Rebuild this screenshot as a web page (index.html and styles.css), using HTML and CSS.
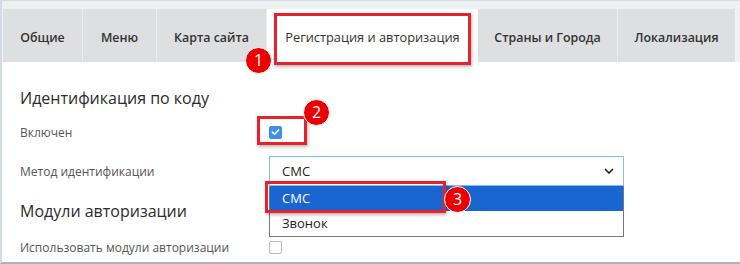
FILE: index.html
```html
<!DOCTYPE html>
<html lang="ru">
<head>
<meta charset="utf-8">
<link rel="stylesheet" href="styles.css">
</head>
<body>
<div class="frame">
  <div class="tabbar">
    <div class="tab t1">Общие</div>
    <div class="tab t2">Меню</div>
    <div class="tab t3">Карта сайта</div>
    <div class="tab active">Регистрация и авторизация</div>
    <div class="tab t5">Страны и Города</div>
    <div class="tab t6">Локализация</div>
  </div>
  <div class="content">
    <h2 class="heading h-first">Идентификация по коду</h2>
    <div class="row r1">
      <div class="label">Включен</div>
      <div class="field"><span class="cb checked"><svg viewBox="0 0 12 12" width="12" height="12"><path d="M2.6 6.2 L5 8.4 L9.4 3.8" fill="none" stroke="#fff" stroke-width="1.8" stroke-linecap="round" stroke-linejoin="round"/></svg></span></div>
    </div>
    <div class="row r2">
      <div class="label">Метод идентификации</div>
      <div class="field">
        <div class="select">
          <span>СМС</span>
          <svg class="chev" viewBox="0 0 10 6" width="10" height="6"><path d="M1 1 L5 5 L9 1" fill="none" stroke="#222" stroke-width="1.6"/></svg>
        </div>
        <div class="dropdown">
          <div class="opt sel">СМС</div>
          <div class="opt">Звонок</div>
        </div>
      </div>
    </div>
    <h2 class="heading h-second">Модули авторизации</h2>
    <div class="row r3">
      <div class="label">Использовать модули авторизации</div>
      <div class="field"><span class="cb"></span></div>
    </div>
  </div>
  <div class="mark m1"></div>
  <div class="mark m2"></div>
  <div class="mark m3"></div>
  <div class="badge b1">1</div>
  <div class="badge b2">2</div>
  <div class="badge b3">3</div>
</div>
</body>
</html>
```

FILE: styles.css
```css
* { box-sizing: border-box; }
html, body { margin: 0; padding: 0; background: #fff; }
body { font-family: "Open Sans", "DejaVu Sans", sans-serif; color: #333; }
.frame {
  position: relative;
  width: 740px;
  height: 264px;
  border-left: 2px solid #d3dbe6;
  border-top: 1px solid #d3dbe6;
  border-bottom: 2px solid #aeb3bb;
  overflow: hidden;
  background: #fff;
}
.tabbar {
  display: flex;
  background: #eff0f2;
  padding: 8px 0 0 1px;
  height: 61px;
}
.tab {
  height: 53px;
  display: flex;
  align-items: center;
  justify-content: center;
  padding-top: 3px;
  background: #dedfe1;
  border-right: 1px solid #ebecee;
  font-size: 12.4px;
  font-weight: 600;
  color: #333;
}
.t1 { width: 80px; }
.t2 { width: 74px; }
.t3 { width: 110px; }
.tab.active { width: 211px; background: #fff; font-weight: 400; font-size: 12.8px; color: #333; border-right: 0; }
.t5 { width: 140px; }
.t6 { width: 119px; border-right: 2px solid #f3f4f5; }
.content { padding: 0 0 0 18px; }
.heading { margin: 0; font-size: 16px; font-weight: 400; color: #2b2b2b; line-height: 22px; }
.h-first { padding-top: 25px; }
.row { display: flex; align-items: center; }
.label { width: 249px; font-size: 12px; color: #555; }
.field { position: relative; }
.r1 { margin-top: 11px; height: 24px; }
.r2 { margin-top: 12px; height: 30px; }
.cb {
  display: flex; align-items: center; justify-content: center;
  width: 13px; height: 13px; border: 1px solid #b9b9b9; border-radius: 2px; background: #fff;
}
.cb.checked { background: #3d8fe9; border-color: #3d8fe9; }
.select {
  width: 355px; height: 30px;
  border: 1px solid #86bdf0;
  display: flex; align-items: center; justify-content: space-between;
  padding: 0 9px 0 12px;
  font-size: 13px; color: #222;
}
.dropdown {
  position: absolute; left: 0; top: 30px;
  width: 355px;
  border: 1px solid #777; border-top: 0;
  background: #fff;
  font-size: 13px; color: #222;
}
.opt { height: 25px; line-height: 25px; padding-left: 12px; }
.opt.sel { background: #1a66d1; color: #fff; }
.h-second { padding-top: 14px; }
.r3 { margin-top: 15px; height: 20px; }
.mark {
  position: absolute;
  border: 3px solid #e8222c;
  box-shadow: 1px 2px 3px rgba(0,0,0,0.28);
}
.m1 { left: 272px; top: 12px; width: 197px; height: 52px; }
.m2 { left: 255px; top: 115px; width: 50px; height: 29px; }
.m3 { left: 263px; top: 180px; width: 181px; height: 32px; }
.badge {
  position: absolute;
  width: 27px; height: 27px; border-radius: 50%;
  background: #ea0000;
  border: 1px solid #fff;
  color: #fff; font-size: 16px; line-height: 25px; text-align: center;
  font-family: "Open Sans", "DejaVu Sans", sans-serif;
}
.b1 { left: 243px; top: 46px; }
.b2 { left: 301px; top: 98px; }
.b3 { left: 442px; top: 185px; }
```
